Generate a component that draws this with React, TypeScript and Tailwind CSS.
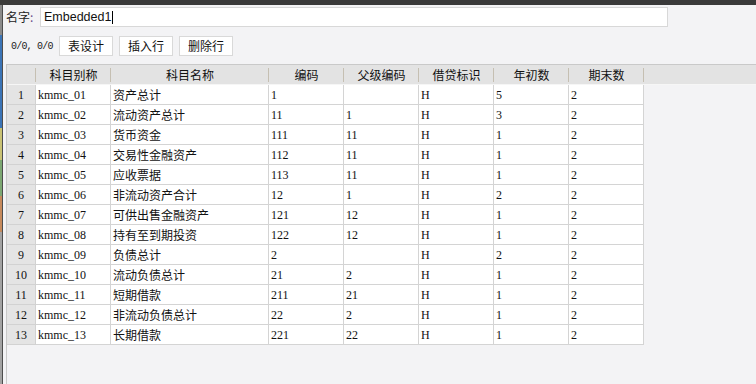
import React from "react";

const COLS = ["科目别称", "科目名称", "编码", "父级编码", "借贷标识", "年初数", "期末数"];

const ROWS: string[][] = [
     ["kmmc_01", "资产总计", "1", "", "H", "5", "2"],
     ["kmmc_02", "流动资产总计", "11", "1", "H", "3", "2"],
     ["kmmc_03", "货币资金", "111", "11", "H", "1", "2"],
     ["kmmc_04", "交易性金融资产", "112", "11", "H", "1", "2"],
     ["kmmc_05", "应收票据", "113", "11", "H", "1", "2"],
     ["kmmc_06", "非流动资产合计", "12", "1", "H", "2", "2"],
     ["kmmc_07", "可供出售金融资产", "121", "12", "H", "1", "2"],
     ["kmmc_08", "持有至到期投资", "122", "12", "H", "1", "2"],
     ["kmmc_09", "负债总计", "2", "", "H", "2", "2"],
     ["kmmc_10", "流动负债总计", "21", "2", "H", "1", "2"],
     ["kmmc_11", "短期借款", "211", "21", "H", "1", "2"],
     ["kmmc_12", "非流动负债总计", "22", "2", "H", "1", "2"],
     ["kmmc_13", "长期借款", "221", "22", "H", "1", "2"],
];

const GRID = "grid grid-cols-[29px_75px_158px_75px_75px_75px_75px_75px]";
const SERIF = "font-['Liberation_Serif','Noto_Sans_CJK_SC',serif]";
const CJK = "font-['Noto_Sans_CJK_SC',sans-serif]";

function ToolButton({ label }: { label: string }) {
     return (
          <button className={`h-[20px] w-[54px] bg-white border border-[#d9d9d9] text-[12px] leading-none text-[#111] ${CJK}`}>
               {label}
          </button>
     );
}

export default function App() {
     return (
          <div className="w-[756px] h-[384px] bg-[#f3f3f5] flex flex-col overflow-hidden">
               <div className="h-[5px] bg-[#3a3a3a] shrink-0" />

               <div className="flex flex-1 min-h-0">
                    {/* window edge behind */}
                    <div className="w-[2px] flex flex-col shrink-0">
                         <div className="h-[30px] bg-[#8a8a8a]" />
                         <div className="h-[93px] bg-[#3b74b6]" />
                         <div className="h-[32px] bg-[#c9c274]" />
                         <div className="h-[36px] bg-[#7da873]" />
                         <div className="h-[36px] bg-[#c68a5c]" />
                         <div className="flex-1 bg-[#a3a3a3]" />
                    </div>
                    <div className="w-[1px] bg-[#4d4d4d] shrink-0" />

                    <div className="flex-1 flex flex-col min-w-0">
                         {/* name row */}
                         <div className="flex items-center pt-[2px] h-[22px]">
                              <span className={`ml-[3px] w-[34px] text-[12px] text-[#222] ${CJK}`}>
                                   名字<span className="text-[#6a4a8a]">:</span>
                              </span>
                              <div className="w-[628px] h-[20px] bg-white border border-[#d8d8d8] flex items-center pl-[3px]">
                                   <span className="font-['Liberation_Sans',sans-serif] text-[12.5px] text-[#111]">Embedded1</span>
                                   <span className="w-[1px] h-[13px] bg-black ml-[1px]" />
                              </div>
                         </div>

                         {/* toolbar */}
                         <div className="flex items-center mt-[9px] h-[20px]">
                              <span className="ml-[8px] w-[48px] font-['Liberation_Mono',monospace] text-[10px] tracking-[-0.8px] text-[#222]">0/0, 0/0</span>
                              <div className="flex gap-[6px]">
                                   <ToolButton label="表设计" />
                                   <ToolButton label="插入行" />
                                   <ToolButton label="删除行" />
                              </div>
                         </div>

                         {/* grid */}
                         <div className="mt-[8px] ml-[3px] flex-1 border-l border-t border-[#c9c9c9] flex flex-col">
                              <div className="h-[20px] bg-[#e3e3e3] border-b border-[#f6f6f6] shrink-0">
                                   <div className={`${GRID} h-full`}>
                                        <div className="flex items-center justify-end">
                                             <span className="w-[1px] h-[14px] bg-[#c5bfb2]" />
                                        </div>
                                        {COLS.map((c) => (
                                             <div key={c} className={`relative flex items-center justify-center text-[12px] text-[#111] ${CJK}`}>
                                                  {c}
                                                  <span className="absolute right-0 top-[3px] w-[1px] h-[14px] bg-[#c5bfb2]" />
                                             </div>
                                        ))}
                                   </div>
                              </div>

                              <div className={GRID}>
                                   {ROWS.map((r, i) => (
                                        <React.Fragment key={i}>
                                             <div className={`h-[20px] bg-[#e4e4e4] border-r border-b border-[#d2d2d2] flex items-center justify-center text-[12px] text-[#111] ${SERIF}`}>
                                                  {i + 1}
                                             </div>
                                             {r.map((v, j) => (
                                                  <div
                                                       key={j}
                                                       className={`h-[20px] bg-white border-r border-b border-[#d4d4d4] flex items-center pl-[2px] text-[12px] text-[#111] ${j === 1 ? CJK : SERIF}`}
                                                  >
                                                       {v}
                                                  </div>
                                             ))}
                                        </React.Fragment>
                                   ))}
                              </div>
                         </div>
                    </div>
               </div>
          </div>
     );
}
